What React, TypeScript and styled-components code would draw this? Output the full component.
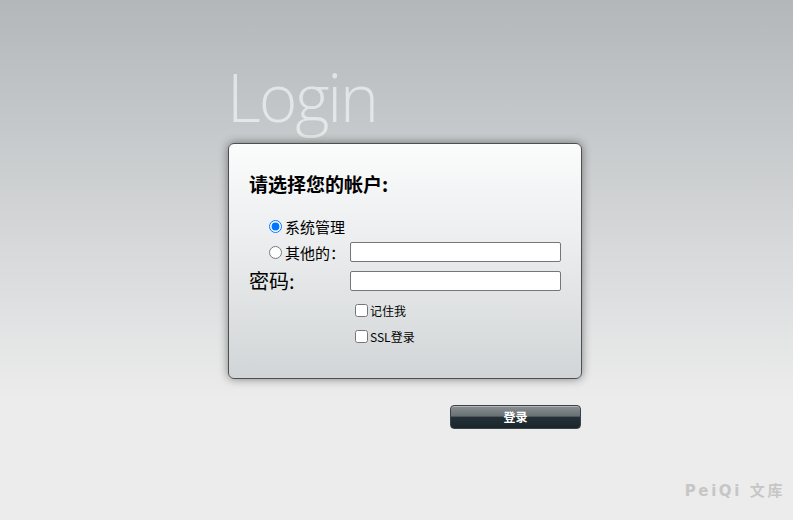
import React from "react";
import styled, { createGlobalStyle } from "styled-components";

const GlobalStyle = createGlobalStyle`
  html, body { margin: 0; padding: 0; }
  body {
    min-height: 520px;
    background: linear-gradient(to bottom, #b3b7ba 0px, #d7d9da 250px, #ececec 400px, #ececec 100%);
    background-color: #ececec;
    font-family: "Noto Sans CJK SC", "Noto Sans", sans-serif;
  }
`;

const Page = styled.div`
  position: relative;
  height: 520px;
  padding-left: 228px;
  box-sizing: border-box;
  overflow: hidden;
`;

const Column = styled.div`
  width: 354px;
  display: flex;
  flex-direction: column;
`;

const Heading = styled.h1`
  margin: 56px 0 7px -1px;
  height: 80px;
  font-family: "Open Sans", "Lato", sans-serif;
  font-weight: 300;
  font-size: 66px;
  line-height: 80px;
  letter-spacing: -2.2px;
  color: rgba(255, 255, 255, 0.55);
  white-space: nowrap;
`;

const Box = styled.div`
  width: 354px;
  height: 236px;
  box-sizing: border-box;
  border: 1px solid #4d4f51;
  border-radius: 6px;
  background: linear-gradient(to bottom, #fbfcfc 0%, #eceeef 40%, #d2d5d7 100%);
  box-shadow: 0 0 10px rgba(0, 0, 0, 0.45);
  padding: 27px 20px 0 20px;
`;

const Title = styled.div`
  font-size: 19px;
  font-weight: 700;
  line-height: 26px;
  color: #000;
  margin-bottom: 16px;
`;

const Form = styled.div`
  display: grid;
  grid-template-columns: 101px 211px;
  grid-template-rows: 26px 26px 32px 26px 26px;
  align-items: center;
`;

const ChoiceRow = styled.label<{ $span?: boolean }>`
  display: flex;
  align-items: center;
  padding-left: 20px;
  font-size: 15px;
  color: #000;
  grid-column: ${(p) => (p.$span ? "1 / span 2" : "auto")};
  white-space: nowrap;
`;

const Radio = styled.input.attrs({ type: "radio", name: "acct" })`
  margin: 0 3px 0 0;
  width: 13px;
  height: 13px;
`;

const TextInput = styled.input`
  width: 211px;
  height: 20px;
  box-sizing: border-box;
  border: 1px solid #767676;
  border-radius: 2px;
  background: #fff;
  margin: 0;
  padding: 0 3px;
`;

const PassLabel = styled.div`
  font-size: 20px;
  line-height: 26px;
  color: #000;
`;

const CheckRow = styled.label`
  grid-column: 2;
  display: flex;
  align-items: center;
  padding-left: 5px;
  font-size: 12px;
  color: #000;
`;

const Check = styled.input.attrs({ type: "checkbox" })`
  margin: 0 2px 0 0;
  width: 13px;
  height: 13px;
`;

const Actions = styled.div`
  display: flex;
  justify-content: flex-end;
  padding-top: 26px;
  padding-right: 1px;
`;

const SubmitButton = styled.button`
  width: 131px;
  height: 24px;
  border: 1px solid #3a4347;
  border-radius: 4px;
  background: linear-gradient(to bottom, #8a9093 0%, #6a7174 45%, #233037 52%, #1a262c 100%);
  box-shadow: inset 0 1px 0 rgba(255, 255, 255, 0.35);
  color: #fff;
  font-family: "Noto Sans CJK SC", sans-serif;
  font-weight: 700;
  font-size: 12px;
  line-height: 22px;
  padding: 0;
  cursor: pointer;
`;

const Watermark = styled.div`
  position: absolute;
  right: 8px;
  bottom: 20px;
  font-family: "DejaVu Sans", "Noto Sans CJK SC", sans-serif;
  font-weight: 700;
  font-size: 15px;
  letter-spacing: 2.6px;
  color: #c6c6c6;
`;

export default function App() {
  return (
    <>
      <GlobalStyle />
      <Page>
        <Column>
          <Heading>Login</Heading>
          <Box>
            <Title>请选择您的帐户:</Title>
            <Form>
              <ChoiceRow $span>
                <Radio defaultChecked />
                系统管理
              </ChoiceRow>
              <ChoiceRow>
                <Radio />
                其他的：
              </ChoiceRow>
              <TextInput type="text" />
              <PassLabel>密码:</PassLabel>
              <TextInput type="password" />
              <CheckRow>
                <Check />
                记住我
              </CheckRow>
              <CheckRow>
                <Check />
                SSL登录
              </CheckRow>
            </Form>
          </Box>
          <Actions>
            <SubmitButton>登录</SubmitButton>
          </Actions>
        </Column>
        <Watermark>PeiQi 文库</Watermark>
      </Page>
    </>
  );
}
